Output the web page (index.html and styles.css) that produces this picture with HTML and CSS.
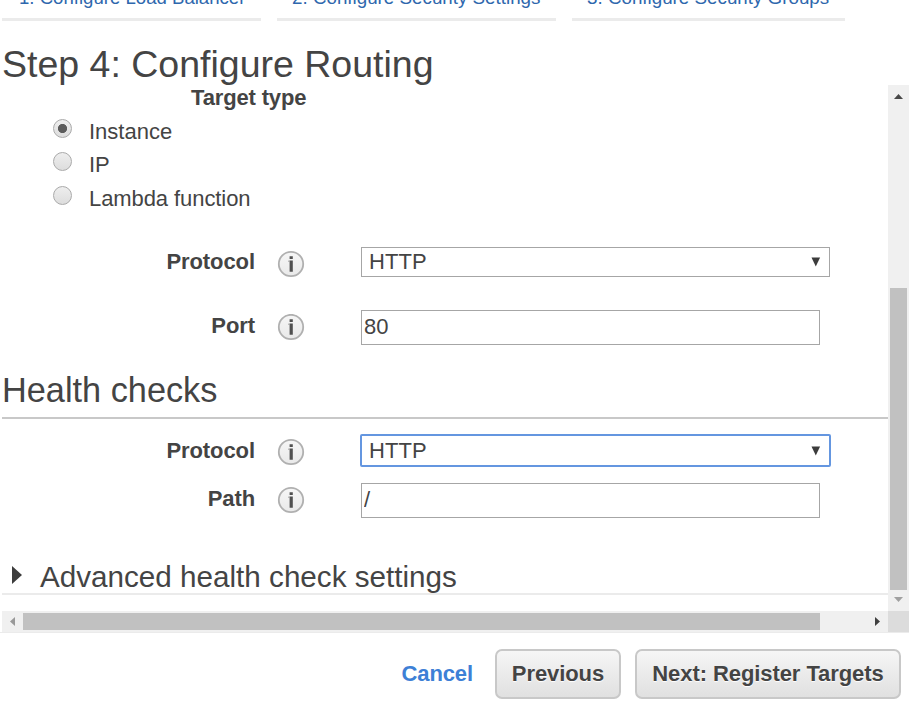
FILE: index.html
```html
<!DOCTYPE html>
<html lang="en">
<head>
<meta charset="utf-8">
<title>Configure Routing</title>
<link rel="stylesheet" href="styles.css">
</head>
<body>
<svg class="defs" width="0" height="0" aria-hidden="true">
  <defs>
    <linearGradient id="info-fill" x1="0" y1="0" x2="0" y2="1">
      <stop offset="0" stop-color="#f6f6f6"/><stop offset="1" stop-color="#e9e9e9"/>
    </linearGradient>
    <symbol id="info" viewBox="0 0 28 28">
      <circle cx="14" cy="14" r="12.2" fill="url(#info-fill)" stroke="#b0b0b0" stroke-width="1.8"/>
      <path d="M12.6 6.3h3.2v2.6h-3.2zM12.6 10.6h3.2v11.2h-3.2z" fill="#505050"/>
      <path d="M11.4 10.6h1.2v1.4h-1.2z" fill="#999"/>
    </symbol>
  </defs>
</svg>
<nav class="tabs">
  <a class="tab tab-1"><span>1. Configure Load Balancer</span></a>
  <a class="tab tab-2"><span>2. Configure Security Settings</span></a>
  <a class="tab tab-3"><span>3. Configure Security Groups</span></a>
</nav>
<h1>Step 4: Configure Routing</h1>
<div class="viewport">
  <main class="content">
    <div class="target-label">Target type</div>
    <div class="radios">
      <label class="radio-row"><input type="radio" name="target" checked><span>Instance</span></label>
      <label class="radio-row"><input type="radio" name="target"><span>IP</span></label>
      <label class="radio-row last"><input type="radio" name="target"><span>Lambda function</span></label>
    </div>
    <div class="field protocol">
      <span class="label">Protocol</span>
      <svg class="info"><use href="#info"/></svg>
      <div class="select"><span>HTTP</span><svg width="10" height="10"><path d="M.5 .5h8.6L4.8 9.5z" fill="#3c3c3c"/></svg></div>
    </div>
    <div class="field port">
      <span class="label">Port</span>
      <svg class="info"><use href="#info"/></svg>
      <input class="text" type="text" value="80">
    </div>
    <h2>Health checks</h2>
    <div class="field health-protocol">
      <span class="label">Protocol</span>
      <svg class="info"><use href="#info"/></svg>
      <div class="select focused"><span>HTTP</span><svg width="10" height="10"><path d="M.5 .5h8.6L4.8 9.5z" fill="#3c3c3c"/></svg></div>
    </div>
    <div class="field path">
      <span class="label">Path</span>
      <svg class="info"><use href="#info"/></svg>
      <input class="text" type="text" value="/">
    </div>
    <h3><svg width="10" height="18"><path d="M0 0L10 9L0 18z" fill="#3c3c3c"/></svg><span>Advanced health check settings</span></h3>
  </main>
  <div class="vbar">
    <svg width="9" height="5"><path d="M0 5L4.5 0L9 5z" fill="#484848"/></svg>
    <div class="thumb"></div>
    <svg width="9" height="5"><path d="M0 0H9L4.5 5z" fill="#a0a0a0"/></svg>
  </div>
  <div class="hbar">
    <svg width="5" height="9"><path d="M5 0V9L0 4.5z" fill="#999"/></svg>
    <div class="thumb"></div>
    <svg width="5" height="9"><path d="M0 0V9L5 4.5z" fill="#404040"/></svg>
  </div>
  <div class="corner"></div>
</div>
<footer>
  <a class="cancel">Cancel</a>
  <button class="previous">Previous</button>
  <button class="next">Next: Register Targets</button>
</footer>
</body>
</html>
```
FILE: styles.css
```css
* { box-sizing: border-box; }
body {
  margin: 0;
  width: 909px;
  height: 709px;
  overflow: hidden;
  background: #fff;
  color: #444;
  font: 22px/26px "Liberation Sans", Arial, sans-serif;
}
.defs { display: block; height: 0; }
.tabs {
  display: flex;
  gap: 16px;
  height: 21px;
  padding-left: 2px;
  overflow: hidden;
}
.tab {
  height: 21px;
  padding-left: 16px;
  border-bottom: 3px solid #ebebeb;
  color: #2e67ad;
  font-size: 18.8px;
  line-height: 20px;
  white-space: nowrap;
}
.tab span { display: block; margin-top: -12px; }
.tab-1 { width: 259px; padding-left: 17px; font-size: 18.6px; }
.tab-2 { width: 279px; padding-left: 15px; }
.tab-3 { width: 273px; padding-left: 15px; }
h1 {
  margin: 23px 0 0 2px;
  height: 41px;
  font-size: 37.5px;
  font-weight: 400;
  line-height: 40px;
  white-space: nowrap;
}
.viewport {
  display: grid;
  grid-template: 526px 21px / 888px 21px;
  border-bottom: 1px solid #ebebeb;
}
.content { padding-left: 2px; overflow: hidden; }
.target-label {
  height: 30px;
  padding-left: 189px;
  font-weight: 700;
  letter-spacing: -.15px;
  line-height: 25px;
}
.radio-row {
  display: flex;
  align-items: center;
  gap: 17px;
  height: 33px;
  padding-left: 51px;
  line-height: 33px;
}
.radio-row.last { height: 34px; letter-spacing: -.08px; }
.radio-row.last span { padding-top: 1px; }
.radio-row input {
  appearance: none;
  width: 19px;
  height: 19px;
  margin: 0 0 6px;
  border: 1px solid #aaa;
  border-radius: 50%;
  background: linear-gradient(#eee, #ddd);
}
.radio-row input:checked {
  background: radial-gradient(circle, #5c5c5c 4.2px, transparent 5px), linear-gradient(#eee, #ddd);
}
.field {
  display: grid;
  grid-template-columns: 253px 62px 1fr;
}
.field > :last-child { margin-left: 44px; }
.label {
  font-weight: 700;
  letter-spacing: -.08px;
  text-align: right;
}
.info { width: 28px; height: 28px; margin-left: 22px; }
.protocol { height: 63px; margin-top: 32px; }
.port { height: 57px; }
.protocol .label { margin-top: 2px; }
.port .label { margin-top: 3px; }
.protocol .info, .port .info { margin-top: 3px; }
.health-protocol .label { margin-top: 4px; }
.path .label { margin-top: 3px; }
.health-protocol .info { margin-top: 4px; }
.path .info { margin-top: 3px; }
.select {
  display: flex;
  align-items: center;
  justify-content: space-between;
  width: 469px;
  height: 30px;
  padding: 0 8px 0 7px;
  border: 1px solid #a6a6a6;
  letter-spacing: .1px;
}
.field > .select.focused {
  width: 471px;
  height: 33px;
  margin-left: 43px;
  padding: 0 8px 0 7px;
  border: 2px solid #6496e0;
  border-radius: 2px;
}
.text {
  width: 459px;
  height: 35px;
  margin: 0;
  padding: 0 0 1px 2px;
  border: 1px solid #a6a6a6;
  outline: 0;
  background: #fff;
  color: inherit;
  font: inherit;
}
h2 {
  height: 52px;
  margin: 0 0 15px;
  padding-top: 3px;
  border-bottom: 2px solid #c8c8c8;
  font-size: 34.3px;
  font-weight: 400;
  line-height: 40px;
}
.health-protocol { height: 49px; }
.path { height: 74px; }
h3 {
  display: flex;
  align-items: center;
  gap: 18px;
  height: 38px;
  margin: 0;
  padding: 0 0 0 10px;
  border-bottom: 2px solid #ebebeb;
  font-size: 29.65px;
  font-weight: 400;
  line-height: 36px;
}
h3 span { padding-top: 4px; }
h3 svg { margin-bottom: 1px; }
.vbar {
  display: flex;
  flex-direction: column;
  align-items: center;
  padding: 9px 0;
  background: #f0f0f0;
}
.vbar .thumb { width: 17px; height: 302px; margin: 189px 0 7px; background: #c1c1c1; }
.hbar {
  display: flex;
  align-items: center;
  margin-left: 2px;
  padding: 0 8px;
  background: #f0f0f0;
}
.hbar .thumb { width: 797px; height: 17px; margin: 0 55px 0 8px; background: #c1c1c1; }
.corner { background: #dcdcdc; }
footer {
  display: flex;
  justify-content: flex-end;
  align-items: center;
  padding: 16px 8px 0 0;
  font-weight: 700;
}
.cancel { margin-right: 22px; color: #3d80d6; letter-spacing: -.1px; }
button {
  height: 50px;
  padding: 0;
  border: 2px solid #c8c8c8;
  border-radius: 7px;
  background: linear-gradient(#f6f6f6, #e0e0e0);
  color: #444;
  font: inherit;
  letter-spacing: -.08px;
  text-shadow: 0 1px 1px #fff;
}
.previous { width: 126px; margin-right: 14px; }
.next { width: 266px; }
```
